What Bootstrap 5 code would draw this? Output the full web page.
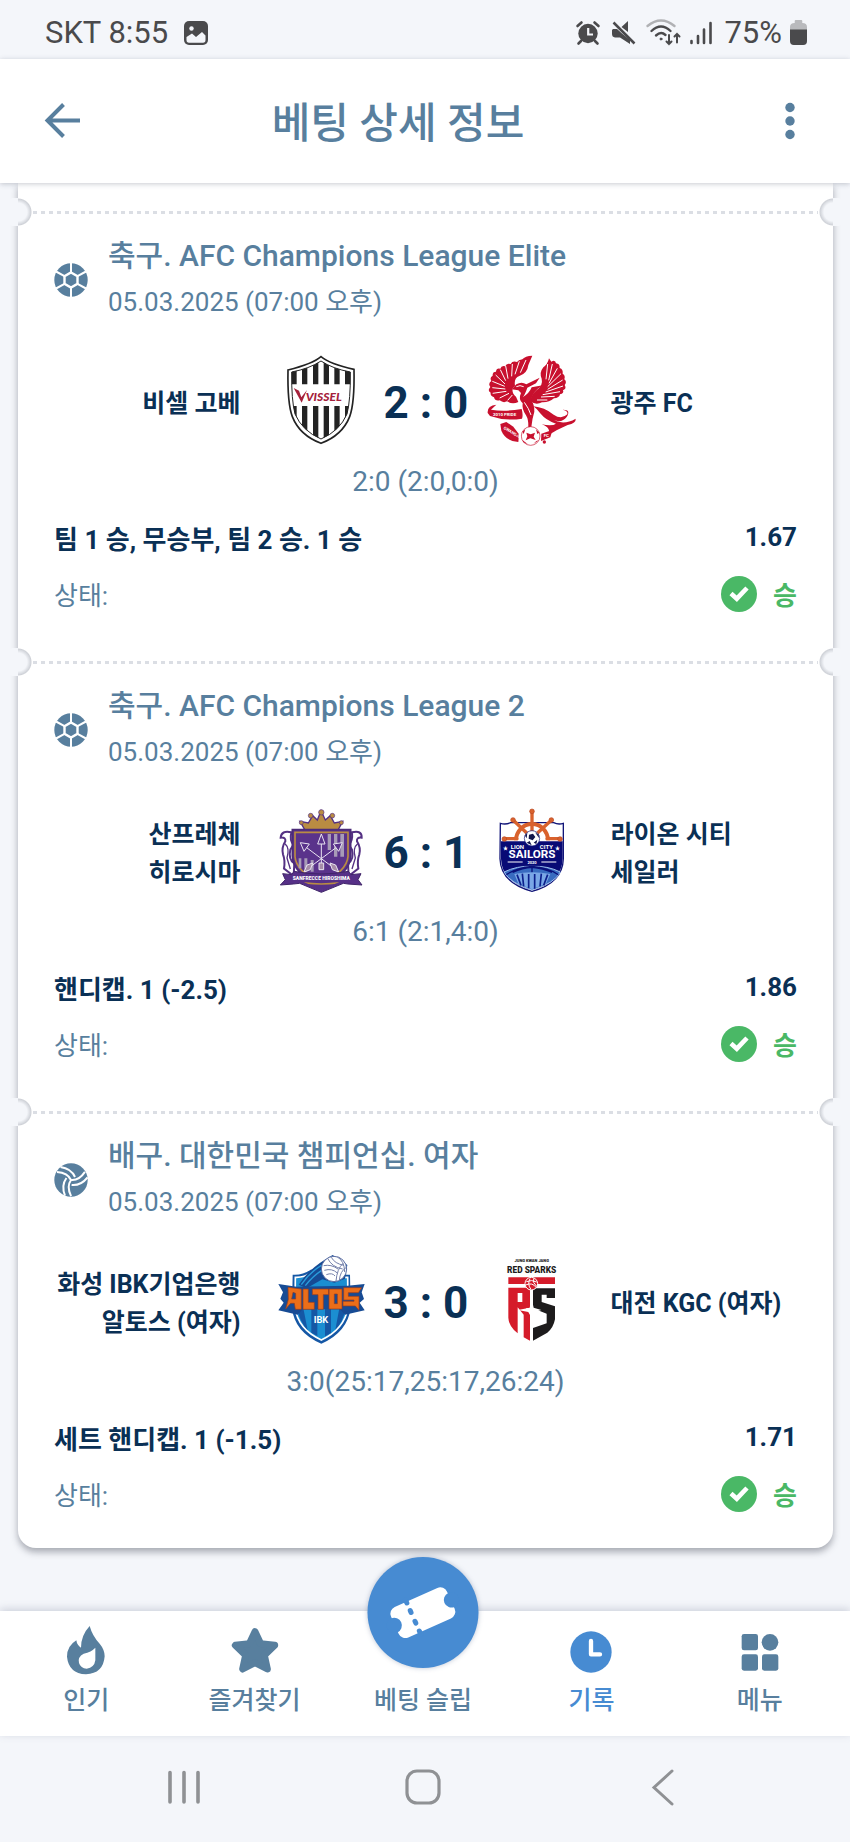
<!DOCTYPE html>
<html lang="ko">
<head>
<meta charset="utf-8">
<meta name="viewport" content="width=device-width, initial-scale=1">
<title>베팅 상세 정보</title>
<link href="https://cdn.jsdelivr.net/npm/bootstrap@5.3.0/dist/css/bootstrap.min.css" rel="stylesheet">
<style>
:root { --ink: #0a3055; --slate: #587f9e; --accent: #478bd2; --win: #4ab866; --canvas: #f4f6fa; }
body { background: var(--canvas); color: var(--slate); font-family: Roboto, "Noto Sans CJK KR", sans-serif; word-break: keep-all; }
svg { display: block; flex: none; overflow: visible; }
.plain { background: none; border: 0; padding: 0; color: inherit; }
.statusbar { height: 59px; padding: 6px 43px 0 45px; color: #4a4a4c; font-size: 31px; line-height: 36px; }
.appbar { height: 124px; padding: 0 44px; box-shadow: 0 1px 5px rgba(60,70,90,.28); z-index: 2; }
.appbar h1 { flex: 1 1 0; padding: 6px 64px 0 0; font-size: 42px; line-height: 48px; font-weight: 500; text-align: center; }
.slip { margin: 0 17px 63px 18px; border-radius: 0 0 18px 18px; box-shadow: 0 4px 7px rgba(50,55,70,.4); }
.slip-top { height: 15px; }
.seam { height: 28px; background: repeating-linear-gradient(90deg, #dbdee4 0 4px, transparent 4px 8px) 15px 13px / calc(100% - 30px) 3px no-repeat; }
.seam::before, .seam::after { content: ""; position: absolute; top: 0; width: 30px; height: 28px; }
.seam::before { left: -16px; border-radius: 10px 0 0 10px; background: linear-gradient(var(--canvas), var(--canvas)) 0 0 / 16px 100% no-repeat, radial-gradient(circle at 16px 50%, var(--canvas) 9px, #cfd2d8 13px, transparent 14px); }
.seam::after { right: -16px; border-radius: 0 10px 10px 0; background: linear-gradient(var(--canvas), var(--canvas)) 100% 0 / 16px 100% no-repeat, radial-gradient(circle at 14px 50%, var(--canvas) 9px, #cfd2d8 13px, transparent 14px); }
.event { padding: 8px 36px 30px; }
.league { font-size: 30px; line-height: 44px; font-weight: 500; }
.when { font-size: 26px; line-height: 48px; }
.match { margin-top: 32px; }
.team { flex: 1 1 0; min-width: 0; padding-top: 4px; color: var(--ink); font-size: 25px; line-height: 38px; font-weight: 700; white-space: nowrap; }
.score { width: 123px; padding-top: 2px; color: var(--ink); font-size: 44px; line-height: 48px; font-weight: 700; }
.periods { margin-top: 16px; font-size: 28px; line-height: 40px; }
.pick { margin-top: 18px; color: var(--ink); font-size: 26px; line-height: 40px; font-weight: 700; }
.odds { line-height: 34px; }
.state { margin-top: 12px; font-size: 26px; line-height: 40px; }
.state span { padding-top: 4px; }
.win { color: var(--win); font-weight: 700; }
.event { padding-bottom: 32px; }
.tabs { padding: 0 6px 0 2px; box-shadow: 0 -2px 8px rgba(90,100,130,.25); }
.tab { flex: 1 1 0; padding: 15px 0 20px; color: var(--slate); font-size: 25px; line-height: 30px; font-weight: 500; text-decoration: none; }
.tab span { margin-top: 12px; }
.tab.active { color: var(--accent); }
.fab { top: -54px; width: 111px; height: 111px; border-radius: 50%; background: var(--accent); box-shadow: 0 0 5px rgba(70,90,130,.35); }
.sysbar { height: 106px; gap: 199px; padding-right: 5px; padding-bottom: 4px; color: #8f9194; }
.logo-home { margin-left: 36px; }
.logo-away { margin-right: 35px; }
</style>
</head>
<body>
<svg width="0" height="0" class="position-absolute" aria-hidden="true">
  <symbol id="soccer" viewBox="0 0 34 34">
    <circle cx="17" cy="17" r="16.7" fill="currentColor"/>
    <path d="M17 9.500 23.500 13.200V20.800L17 24.500 10.500 20.800V13.200Z" fill="none" stroke="#fff" stroke-width="2.400"/>
    <path d="M17 0V9.500M17 24.500V34M23.500 13.200 32 8.500M23.500 20.800 32 25.500M10.500 13.200 2 8.500M10.500 20.800 2 25.500" stroke="#fff" stroke-width="2"/>
  </symbol>
  <symbol id="volley" viewBox="0 0 34 34">
    <circle cx="17" cy="17" r="16.700" fill="currentColor"/>
    <g fill="none" stroke="#fff" stroke-width="2">
      <path d="M17 17C15 12.500 10.500 9.500 3 9M21 14C18.500 8.500 13.500 5 6.500 4"/>
      <path d="M17 17C15 12.500 10.500 9.500 3 9M21 14C18.500 8.500 13.500 5 6.500 4" transform="rotate(120 17 17)"/>
      <path d="M17 17C15 12.500 10.500 9.500 3 9M21 14C18.500 8.500 13.500 5 6.500 4" transform="rotate(240 17 17)"/>
    </g>
  </symbol>
  <symbol id="check" viewBox="0 0 36 36">
    <circle cx="18" cy="18" r="18" fill="#4ab866"/>
    <path d="M10 17.500 15.800 22.700 26 12" fill="none" stroke="#fff" stroke-width="4.600"/>
  </symbol>
</svg>

<div class="min-vh-100 d-flex flex-column">
  <div class="statusbar d-flex align-items-center">
    <span>SKT 8:55</span>
    <svg class="ms-3" width="24" height="24" viewBox="0 0 24 24"><rect width="24" height="24" rx="5" fill="#4a4a4c"/><path d="M2.500 16 8 12.500 12 16 18 11 21.500 14.500V19Q21.500 21.800 19 21.800H5Q2.500 21.800 2.500 19Z" fill="#f4f6fa"/><circle cx="7.500" cy="7.500" r="2.200" fill="#f4f6fa"/></svg>
    <div class="ms-auto d-flex align-items-center">
      <svg width="24" height="24" viewBox="0 0 24 24"><circle cx="12" cy="12.500" r="9.700" fill="currentColor"/><path d="M1.500 5 5.500 1.500M22.500 5 18.500 1.500M5 20 2.500 22.500M19 20 21.500 22.500" stroke="currentColor" stroke-width="2.600" stroke-linecap="round"/><path d="M12.200 7V13.500H17" fill="none" stroke="#f4f6fa" stroke-width="2.200"/></svg>
      <svg class="ms-2" width="30" height="26" viewBox="0 0 30 26"><path d="M5 9H9L14 13.500 22 20V24L12 17.500H7Q4 17 4 14V10ZM20 1V12L13.500 7Z" fill="currentColor"/><path d="M5.500 2.500 26.500 23.500" stroke="currentColor" stroke-width="2.500"/></svg>
      <svg class="ms-2" width="36" height="27" viewBox="0 0 36 27" fill="none" stroke="currentColor" stroke-width="2.400" stroke-linecap="round"><path d="M1.500 7Q15-4 28.500 7" opacity=".4"/><path d="M5.500 12Q15 3 24.500 12"/><path d="M10 16.500Q15 12 19.500 16"/><circle cx="15" cy="20" r="1" fill="currentColor" stroke-width="1"/><path d="M23 16V25M20.500 22.500 23 25 25.500 22.500M31 23.500V15M28.500 17.500 31 15 33.500 17.500" stroke-width="2"/></svg>
      <svg class="ms-2" width="22" height="24" viewBox="0 0 22 24" stroke="currentColor" stroke-width="2.600" stroke-linecap="round"><path d="M1.500 20V22M8 15V22M14 8.500V22M20.500 2V22"/></svg>
      <span class="ms-2 ps-1">75%</span>
      <svg class="ms-2" width="17" height="25" viewBox="0 0 18 25" preserveAspectRatio="none"><path d="M5 3V1Q5 0 6 0H12Q13 0 13 1V3Q18 3 18 7V10H0V7Q0 3 5 3Z" fill="#b9babd"/><path d="M0 9.500H18V21Q18 25 14 25H4Q0 25 0 21Z" fill="currentColor"/></svg>
    </div>
  </div>

  <header class="appbar bg-white position-relative d-flex align-items-center">
    <button type="button" class="plain" aria-label="뒤로"><svg width="36" height="36" viewBox="0 0 36 36" fill="none" stroke="currentColor" stroke-width="4"><path d="M36 17.500H4M19.500 1.500 3.500 17.500 19.500 33.500"/></svg></button>
    <h1 class="m-0">베팅 상세 정보</h1>
    <button type="button" class="plain pe-2" aria-label="더 보기"><svg width="18" height="36" viewBox="0 0 18 36" fill="currentColor"><circle cx="10" cy="4.500" r="4.700"/><circle cx="10" cy="18" r="4.700"/><circle cx="10" cy="31.500" r="4.700"/></svg></button>
  </header>

  <main class="flex-grow-1">
    <div class="slip bg-white">
      <div class="slip-top"></div>

      <div class="seam position-relative"></div>
      <section class="event">
        <div class="d-flex align-items-center">
          <svg width="34" height="34"><use href="#soccer"/></svg>
          <div class="ms-3 ps-1"><h2 class="league m-0">축구. AFC Champions League Elite</h2><div class="when">05.03.2025 (07:00 오후)</div></div>
        </div>
        <div class="match d-flex align-items-center">
          <div class="team text-end">비셀 고베</div>
          <svg class="logo-home" width="88" height="88" viewBox="18 54 264 264">
            <path d="M150 50Q176 72 249 88Q251 190 236 230Q214 286 150 310Q86 286 64 230Q49 190 51 90Q124 72 150 50Z" fill="#fff" stroke="#232323" stroke-width="5"/>
            <clipPath id="vk"><path d="M150 63Q185 86 238 96Q239 180 228 222Q206 273 150 297Q94 273 72 222Q61 180 62 96Q115 86 150 63Z"/></clipPath>
            <g clip-path="url(#vk)" fill="#232323"><path d="M61 60H77V133H61ZM93 60H109V133H93ZM126 60H142V133H126ZM158 60H174V133H158ZM190 60H206V133H190ZM222 60H240V133H222ZM61 198H77V300H61ZM93 198H109V300H93ZM126 198H142V300H126ZM158 198H174V300H158ZM190 198H206V300H190ZM222 198H240V300H222Z"/></g>
            <path d="M150 63Q185 86 238 96Q239 180 228 222Q206 273 150 297Q94 273 72 222Q61 180 62 96Q115 86 150 63Z" fill="none" stroke="#232323" stroke-width="3"/>
            <path d="M68 144 84 152 91 172 108 150 92 188Z" fill="#a5213b"/>
            <text x="104" y="183" font-family="Lato, sans-serif" font-size="36" font-weight="900" font-style="italic" fill="#a5213b">VISSEL</text>
          </svg>
          <div class="score text-center">2 : 0</div>
          <svg class="logo-away" width="88" height="88" viewBox="651 54 264 264">
            <g fill="#c8102e">
              <path d="M784 47Q762 48 754 58Q742 60 738 66Q724 62 719 72Q706 68 703 79Q691 75 688 86Q676 83 675 95Q664 95 665 107Q655 112 661 123Q650 131 658 141Q648 152 659 158Q657 168 669 172Q672 184 686 181Q697 190 708 184Q724 194 742 186L735 170Q722 160 725 145L732 137Q728 114 745 108Q769 100 772 75Z"/>
              <path d="M834 55Q830 73 817 82Q804 98 812 116Q817 137 796 151Q779 166 778 184Q795 197 813 187Q834 188 849 175Q865 174 867 163Q880 160 876 151Q888 146 881 135Q889 126 880 118Q884 106 875 101Q877 88 866 84Q867 71 855 70Q853 58 841 65Z"/>
              <path d="M722 148 736 133Q752 124 766 133L806 113 795 130 769 143Q762 164 755 172Q775 160 782 142L815 136Q783 156 780 181Q791 194 790 215Q783 238 781 261H772Q773 239 765 226Q752 208 755 190Q741 178 750 159L742 151Z"/>
              <path d="M787 199Q820 202 848 224Q871 240 889 223Q892 212 875 209Q901 208 887 231Q874 249 849 241Q880 256 914 236Q916 249 890 255Q857 269 829 287Q845 266 812 253Q844 260 855 251Q824 240 809 221Q799 207 787 199Z"/>
              <path d="M650 219Q648 196 676 194L660 209Q700 216 752 207Q757 225 753 236Q702 244 657 228Z"/>
              <path d="M688 252 706 246 727 260 744 283 742 306Q705 304 691 272Z"/><path d="M811 281 844 270 838 292 810 303Z"/><circle cx="820" cy="306" r="5"/>
            </g>
            <g stroke="#fff" fill="none" stroke-width="3"><path d="M765 60 748 98M745 64 732 103M724 72 722 109M704 78 711 116M688 89 704 122M674 105 702 132M664 124 701 139M664 143 703 147M665 160 706 154M686 174 714 160M710 181 724 165M830 72 825 118M844 72 833 121M859 85 834 130M870 101 830 140M875 120 830 148M876 138 824 156M867 155 815 164M851 169 810 171M829 180 798 180"/><path d="M736 140Q747 134 758 140M760 187Q773 204 780 225"/></g>
            <circle cx="779" cy="288" r="28" fill="#fff" stroke="#c8102e" stroke-width="2"/><path d="M766 278 779 283 792 278 788 290 794 300 778 295 764 301 769 289ZM754 275 763 268 758 282ZM795 268 805 278 799 282ZM754 300 762 306 771 313 757 307ZM787 312 796 303 804 301Z" fill="#c8102e"/>
            <text x="666" y="227" font-size="13" font-weight="700" fill="#fff">2010 PRIDE</text><text x="697" y="266" font-size="12" font-weight="700" fill="#fff" transform="rotate(31 697 266)">GWANGJU</text><text x="818" y="291" font-size="13" font-weight="700" fill="#fff">FC</text>
          </svg>
          <div class="team">광주 FC</div>
        </div>
        <div class="periods text-center">2:0 (2:0,0:0)</div>
        <div class="pick d-flex align-items-start justify-content-between"><span>팀 1 승, 무승부, 팀 2 승. 1 승</span><span class="odds">1.67</span></div>
        <div class="state d-flex align-items-center"><span>상태:</span><svg class="ms-auto" width="36" height="36"><use href="#check"/></svg><span class="win ms-3">승</span></div>
      </section>

      <div class="seam position-relative"></div>
      <section class="event">
        <div class="d-flex align-items-center">
          <svg width="34" height="34"><use href="#soccer"/></svg>
          <div class="ms-3 ps-1"><h2 class="league m-0">축구. AFC Champions League 2</h2><div class="when">05.03.2025 (07:00 오후)</div></div>
        </div>
        <div class="match d-flex align-items-center">
          <div class="team text-end">산프레체<br>히로시마</div>
          <svg class="logo-home" width="88" height="88" viewBox="18 54 264 264">
            <path d="M87 94 112 99 125 77 139 90 150 62 163 90 178 77 190 99 215 94 202 119H101Z" fill="#b98c42" stroke="#543083" stroke-width="4"/>
            <g fill="#b98c42" stroke="#543083" stroke-width="2"><circle cx="151" cy="67" r="8"/><circle cx="119" cy="77" r="7"/><circle cx="184" cy="77" r="7"/><circle cx="91" cy="98" r="6"/><circle cx="211" cy="98" r="6"/></g>
            <path d="M61 127Q31 120 29 143Q45 141 43 154Q31 173 36 193Q43 211 39 236L68 258 70 220Q51 208 58 179L68 164Q55 154 61 127Z" fill="#fff" stroke="#543083" stroke-width="6"/>
            <path d="M243 127Q273 120 272 143Q256 141 258 154Q270 173 265 193Q258 211 262 236L233 258 231 220Q250 208 243 179L233 164Q246 154 243 127Z" fill="#fff" stroke="#543083" stroke-width="6"/>
            <path d="M42 161Q57 174 48 204L58 237M260 161Q244 174 253 204L243 237" fill="none" stroke="#543083" stroke-width="4"/>
            <path d="M64 119H239V198Q237 252 151 290Q66 252 64 198Z" fill="#5a338b" stroke="#4b2b79" stroke-width="5"/>
            <path d="M72 127H231V200Q227 244 151 280Q75 244 72 200Z" fill="none" stroke="#b98c42" stroke-width="5"/>
            <g fill="#a79bb7"><path d="M170 132H180V180H170ZM189 132H199V200H189ZM208 132H219V200H208ZM83 205H91V235H83ZM100 205H109V245H100ZM119 210H128V245H119Z"/></g>
            <g fill="#5a338b" stroke="#e9e4f1" stroke-width="3"><path d="M151 132 162 162H140ZM88 158 115 162 99 184ZM214 158 187 162 203 184Z"/><path d="M151 162V234M107 173 190 235M195 173 112 235" fill="none"/><path d="M108 225 125 219 118 239 99 246ZM194 225 177 219 184 239 203 246ZM144 219H158V239H144Z" fill="#a68da9"/></g>
            <path d="M35 251 62 254 69 244Q150 260 232 244L240 254 270 251 261 269 273 285 231 282 217 280 151 307 86 280 67 282 28 285 43 269Z" fill="#563087" stroke="#402569" stroke-width="3"/>
            <path d="M98 276Q150 283 205 276L151 299Z" fill="#b98c42"/><path d="M106 282Q150 287 196 282L151 301Z" fill="#563087"/>
            <text x="151" y="270" text-anchor="middle" font-size="15" font-weight="900" fill="#fff">SANFRECCE HIROSHIMA</text>
          </svg>
          <div class="score text-center">6 : 1</div>
          <svg class="logo-away" width="88" height="88" viewBox="651 54 264 264">
            <path d="M688 100Q704 105 719 98H848Q862 105 877 100V206Q875 279 783 304Q689 278 687 206Z" fill="#fff" stroke="#111578" stroke-width="4"/>
            <path d="M690 154H875V206Q873 276 783 300Q692 276 690 206Z" fill="#080a75"/>
            <g stroke="#d9622d" fill="none"><path d="M735 151A48 49 0 0 1 831 151" stroke-width="12"/><g stroke-width="10" stroke-linecap="round"><path d="M783 142V65M783 144 727 91M783 144 841 91M738 146H700M828 146H867"/></g></g>
            <g fill="#d9622d" stroke="#b84924" stroke-width="2"><circle cx="783" cy="64" r="7"/><circle cx="726" cy="90" r="7"/><circle cx="841" cy="90" r="7"/><circle cx="700" cy="147" r="7"/><circle cx="867" cy="147" r="7"/></g>
            <circle cx="783" cy="145" r="23" fill="#fff" stroke="#111578" stroke-width="2"/><path d="M774 134 786 131 793 141 785 151 773 146ZM762 137 769 128 767 145ZM792 127 803 134 804 144ZM767 158 776 153 782 166ZM788 158 799 149 796 162Z" fill="#11154b"/>
            <g fill="#fff" font-family="Roboto, sans-serif" font-weight="700" text-anchor="middle"><text x="739" y="178" font-size="18">LION</text><text x="826" y="178" font-size="18">CITY</text><text x="783" y="205" font-size="35">SAILORS</text><text x="783" y="221" font-size="12">2020</text><text x="704" y="179" font-size="15">★</text><text x="860" y="179" font-size="15">★</text></g>
            <path d="M710 216H755M811 216H856" stroke="#fff" stroke-width="3"/>
            <path d="M699 246Q738 227 783 229Q830 227 868 246Q851 280 783 300Q717 279 699 246Z" fill="#386bc0" stroke="#9ebeed" stroke-width="3"/>
            <path d="M706 254Q738 232 783 229Q833 233 862 254M725 247Q755 234 783 232Q816 235 843 247M783 228V255" stroke="#09107a" stroke-width="4" fill="none"/>
            <path d="M730 252Q783 242 838 252L825 281 783 298 742 281Z" fill="#7aa7e6"/><path d="M738 254 750 286M754 251 758 289M773 252V295M791 252V296M811 251 807 289M830 254 818 286" stroke="#0c208c" stroke-width="5"/>
          </svg>
          <div class="team">라이온 시티<br>세일러</div>
        </div>
        <div class="periods text-center">6:1 (2:1,4:0)</div>
        <div class="pick d-flex align-items-start justify-content-between"><span>핸디캡. 1 (-2.5)</span><span class="odds">1.86</span></div>
        <div class="state d-flex align-items-center"><span>상태:</span><svg class="ms-auto" width="36" height="36"><use href="#check"/></svg><span class="win ms-3">승</span></div>
      </section>

      <div class="seam position-relative"></div>
      <section class="event">
        <div class="d-flex align-items-center">
          <svg width="34" height="34"><use href="#volley"/></svg>
          <div class="ms-3 ps-1"><h2 class="league m-0">배구. 대한민국 챔피언십. 여자</h2><div class="when">05.03.2025 (07:00 오후)</div></div>
        </div>
        <div class="match d-flex align-items-center">
          <div class="team text-end">화성 IBK기업은행<br>알토스 (여자)</div>
          <svg class="logo-home" width="88" height="88" viewBox="18 54 264 264">
            <path d="M65 104Q95 106 119 89L151 83 190 95Q211 106 237 104L239 203Q230 276 151 311Q70 276 63 203Z" fill="#1557a5"/>
            <path d="M73 112Q100 113 120 98L151 92 183 104Q211 114 230 112L231 203Q220 268 151 300Q81 268 72 203Z" fill="#1b8ed1" stroke="#fff" stroke-width="5"/>
            <path d="M79 205H97L110 271Q85 244 79 205ZM121 205H139V288L121 278ZM162 205H180V279L162 289ZM205 205H224Q216 247 193 269Z" fill="#1557a5"/>
            <path d="M83 134Q114 84 185 45L229 75 222 116 190 128 154 118 107 145Z" fill="#164a94"/><path d="M91 134Q115 98 151 76M103 137Q126 108 151 92" stroke="#299cdc" stroke-width="4" fill="none"/>
            <circle cx="189" cy="87" r="38" fill="#fff" stroke="#596da3" stroke-width="3"/><path d="M158 77Q180 72 201 87M160 91Q183 84 199 99M166 104Q184 97 192 108M181 52Q191 71 219 76M170 55Q182 81 215 87M226 82Q207 94 205 121M216 70Q198 87 195 123M199 51Q220 62 221 96" fill="none" stroke="#7480aa" stroke-width="3"/>
            <path d="M22 132 77 140 230 137 281 132 272 157 279 177 266 188 281 211 222 224 207 208H95L80 224 22 211 38 188 28 176 36 157Z" fill="#174b94"/>
            <path d="M51 142 91 147V208H73L70 190H59L44 207 52 178ZM66 157 62 177H74V160ZM96 147H112V187H130V208H96ZM124 147H173V164H157V208H141V164H124ZM174 147H213V207H174ZM190 162V191H199V162ZM218 143H272L262 158H232V169H264V211L253 198H216V184H249V180H218Z" fill="#eb6e19" fill-rule="evenodd" stroke="#983b1e" stroke-width="2"/>
            <text x="150" y="249" text-anchor="middle" font-size="28" font-weight="700" fill="#fff">IBK</text>
          </svg>
          <div class="score text-center">3 : 0</div>
          <svg class="logo-away" width="88" height="88" viewBox="651 54 264 264">
            <g text-anchor="middle" font-weight="900" fill="#1d1b1c"><text x="782" y="66" font-size="12">JUNG KWAN JANG</text><text x="782" y="98" font-size="25">RED SPARKS</text></g>
            <path d="M712 112H852V132H712Z" fill="#d51b2a"/>
            <path d="M712 143H777V204H765L777 225V302L758 292V224L740 202V280Q713 258 712 233ZM740 159V186H754V159Z" fill="#d51b2a" fill-rule="evenodd"/>
            <path d="M786 145H852V174H827V164H812V186L852 199V238Q847 264 829 278L786 302V264L827 250V221L786 205Z" fill="#1d1b1c"/>
            <path d="M782 177 788 203 811 210 788 217 782 246 776 217 741 210 776 203Z" fill="#fff"/>
            <circle cx="781" cy="131" r="19" fill="#d51b2a" stroke="#fff" stroke-width="3"/><path d="M766 125Q782 118 797 126M764 135Q784 126 795 142M777 116Q768 133 780 148M788 115Q784 128 796 138" stroke="#fff" stroke-width="3" fill="none"/>
          </svg>
          <div class="team">대전 KGC (여자)</div>
        </div>
        <div class="periods text-center">3:0(25:17,25:17,26:24)</div>
        <div class="pick d-flex align-items-start justify-content-between"><span>세트 핸디캡. 1 (-1.5)</span><span class="odds">1.71</span></div>
        <div class="state d-flex align-items-center"><span>상태:</span><svg class="ms-auto" width="36" height="36"><use href="#check"/></svg><span class="win ms-3">승</span></div>
      </section>
    </div>
  </main>

  <nav class="tabs bg-white d-flex position-relative">
    <a class="tab d-flex flex-column align-items-center" href="#popular"><svg width="48" height="48" viewBox="185 437 144 144"><path d="M268 437Q276 467 298 490Q313 508 313 528Q309 580 257 582Q205 579 200 529Q200 497 228 480Q230 495 242 502Q242 465 268 437ZM285 502Q273 515 250 520Q231 530 236 548Q241 564 259 565Q282 562 285 540Z" fill="currentColor" fill-rule="evenodd"/></svg><span>인기</span></a>
    <a class="tab d-flex flex-column align-items-center" href="#favorites"><svg width="48" height="48" viewBox="690 437 144 144"><path d="M762 454 779 490 821 495 790 525 799 566 762 547 725 566 734 525 703 495 745 490Z" fill="currentColor" stroke="currentColor" stroke-width="21" stroke-linejoin="round"/></svg><span>즐겨찾기</span></a>
    <a class="tab d-flex flex-column align-items-center position-relative" href="#betslip"><i class="fab position-absolute start-50 translate-middle-x"><svg width="111" height="111" viewBox="1102 231 333 333"><g transform="translate(1268 398) rotate(-24)"><rect x="-92" y="-50" width="184" height="100" rx="22" fill="#fff"/><circle cx="-94" r="23" fill="#478bd2"/><circle cx="94" r="23" fill="#478bd2"/><path d="M-32-56V-46M-32-21V-15M-32 14V20M-32 46V56" stroke="#478bd2" stroke-width="15" stroke-linecap="round"/></g></svg></i><svg width="48" height="48"></svg><span>베팅 슬립</span></a>
    <a class="tab active d-flex flex-column align-items-center" href="#history" aria-current="page"><svg width="48" height="48" viewBox="427 437 144 144"><circle cx="499" cy="515" r="62" fill="currentColor"/><path d="M499 482V522H526" fill="none" stroke="#fff" stroke-width="13" stroke-linecap="round" stroke-linejoin="round"/></svg><span>기록</span></a>
    <a class="tab d-flex flex-column align-items-center" href="#menu"><svg width="48" height="48" viewBox="933 437 144 144" fill="currentColor"><rect x="950" y="461" width="49" height="49" rx="7"/><circle cx="1035" cy="486" r="25"/><rect x="950" y="522" width="49" height="49" rx="7"/><rect x="1011" y="522" width="49" height="49" rx="7"/></svg><span>메뉴</span></a>
  </nav>

  <div class="sysbar d-flex align-items-center justify-content-center">
    <button type="button" class="plain" aria-label="최근 앱"><svg width="40" height="40" viewBox="0 0 40 40" stroke="currentColor" stroke-width="3.600" stroke-linecap="round"><path d="M6 5.500V35M20 5.500V35M34 5.500V35"/></svg></button>
    <button type="button" class="plain" aria-label="홈"><svg width="40" height="40" viewBox="0 0 40 40" fill="none" stroke="currentColor" stroke-width="3.200"><rect x="4" y="4" width="32" height="32" rx="10"/></svg></button>
    <button type="button" class="plain" aria-label="이전"><svg width="40" height="40" viewBox="0 0 40 40" fill="none" stroke="currentColor" stroke-width="3" stroke-linecap="round"><path d="M30 4 12 20.500 30 37"/></svg></button>
  </div>
</div>
<script src="https://cdn.jsdelivr.net/npm/bootstrap@5.3.0/dist/js/bootstrap.bundle.min.js"></script>
</body>
</html>
